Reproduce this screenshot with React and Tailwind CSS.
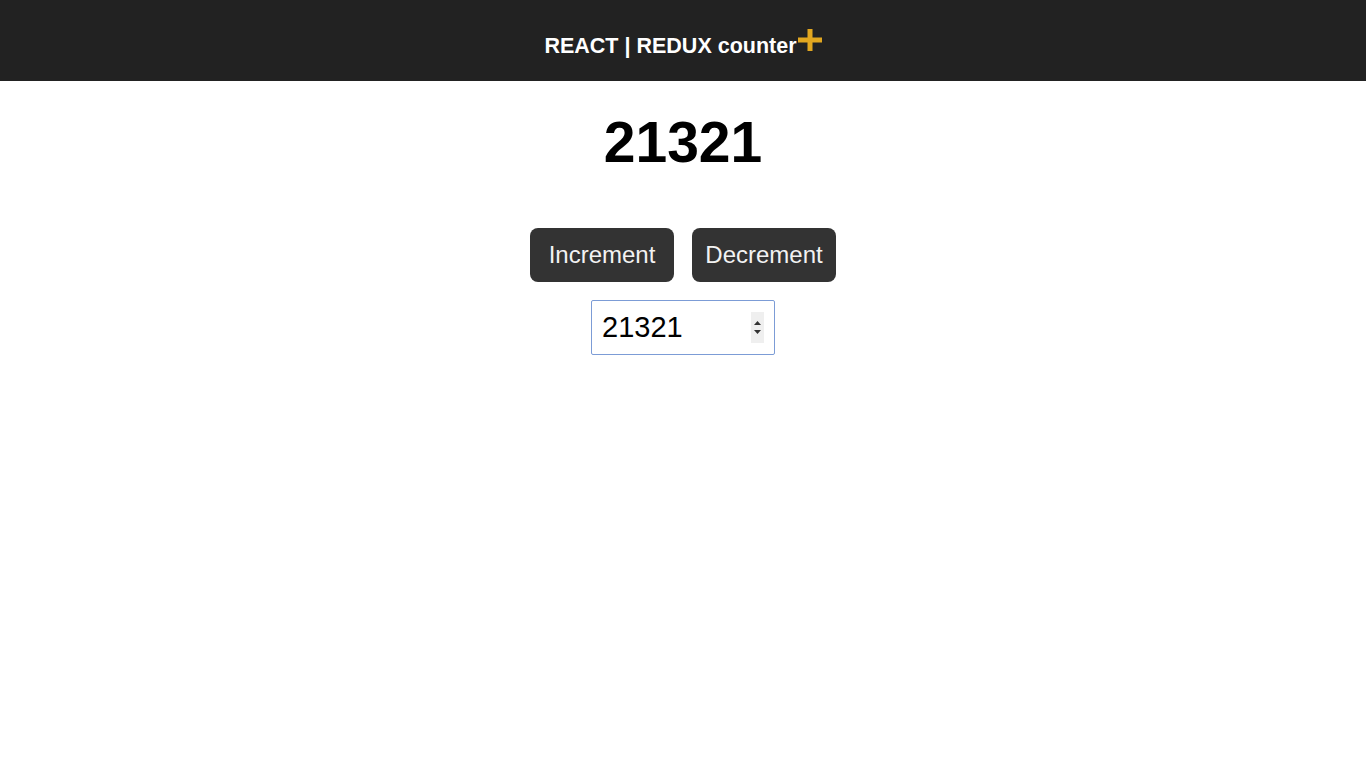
import React, { useState } from "react";

export default function App() {
  const [count, setCount] = useState(21321);

  return (
    <div className="min-h-screen bg-white font-['Liberation_Sans',Arial,sans-serif]">
      {/* Header */}
      <header className="h-[81px] bg-[#222222] flex justify-center pt-[34px]">
        <h1 className="text-[21.5px] leading-[24px] font-bold text-white flex items-start">
          REACT | REDUX counter
          <svg
            width="24"
            height="22"
            viewBox="0 0 24 22"
            className="-mt-[5px] ml-[1px]"
          >
            <rect x="9.5" y="0" width="5" height="22" fill="#e2a720" />
            <rect x="0" y="8.5" width="24" height="5" fill="#e2a720" />
          </svg>
        </h1>
      </header>

      {/* Counter */}
      <main className="flex flex-col items-center">
        <h2 className="mt-[27px] text-[57px] leading-[69px] font-bold text-black">
          {count}
        </h2>

        <div className="mt-[51px] flex gap-[18px]">
          <button
            onClick={() => setCount(count + 1)}
            className="w-[144px] h-[54px] rounded-[8px] bg-[#333333] text-[#f2f2f2] text-[24px]"
          >
            Increment
          </button>
          <button
            onClick={() => setCount(count - 1)}
            className="w-[144px] h-[54px] rounded-[8px] bg-[#333333] text-[#f2f2f2] text-[24px]"
          >
            Decrement
          </button>
        </div>

        <div className="relative mt-[18px]">
          <input
            type="text"
            value={count}
            onChange={(e) => setCount(Number(e.target.value) || 0)}
            className="w-[184px] h-[55px] border border-[#7c9cd6] rounded-[2px] pl-[10px] text-[29px] text-black outline-none"
          />
          {/* spinner */}
          <div className="absolute right-[11px] top-[12px] w-[13px] h-[31px] bg-[#efefef] flex flex-col items-center justify-center gap-[5px]">
            <svg width="7" height="4" viewBox="0 0 7 4">
              <path d="M0 4 L3.5 0 L7 4 Z" fill="#333" />
            </svg>
            <svg width="7" height="4" viewBox="0 0 7 4">
              <path d="M0 0 L3.5 4 L7 0 Z" fill="#333" />
            </svg>
          </div>
        </div>
      </main>
    </div>
  );
}
